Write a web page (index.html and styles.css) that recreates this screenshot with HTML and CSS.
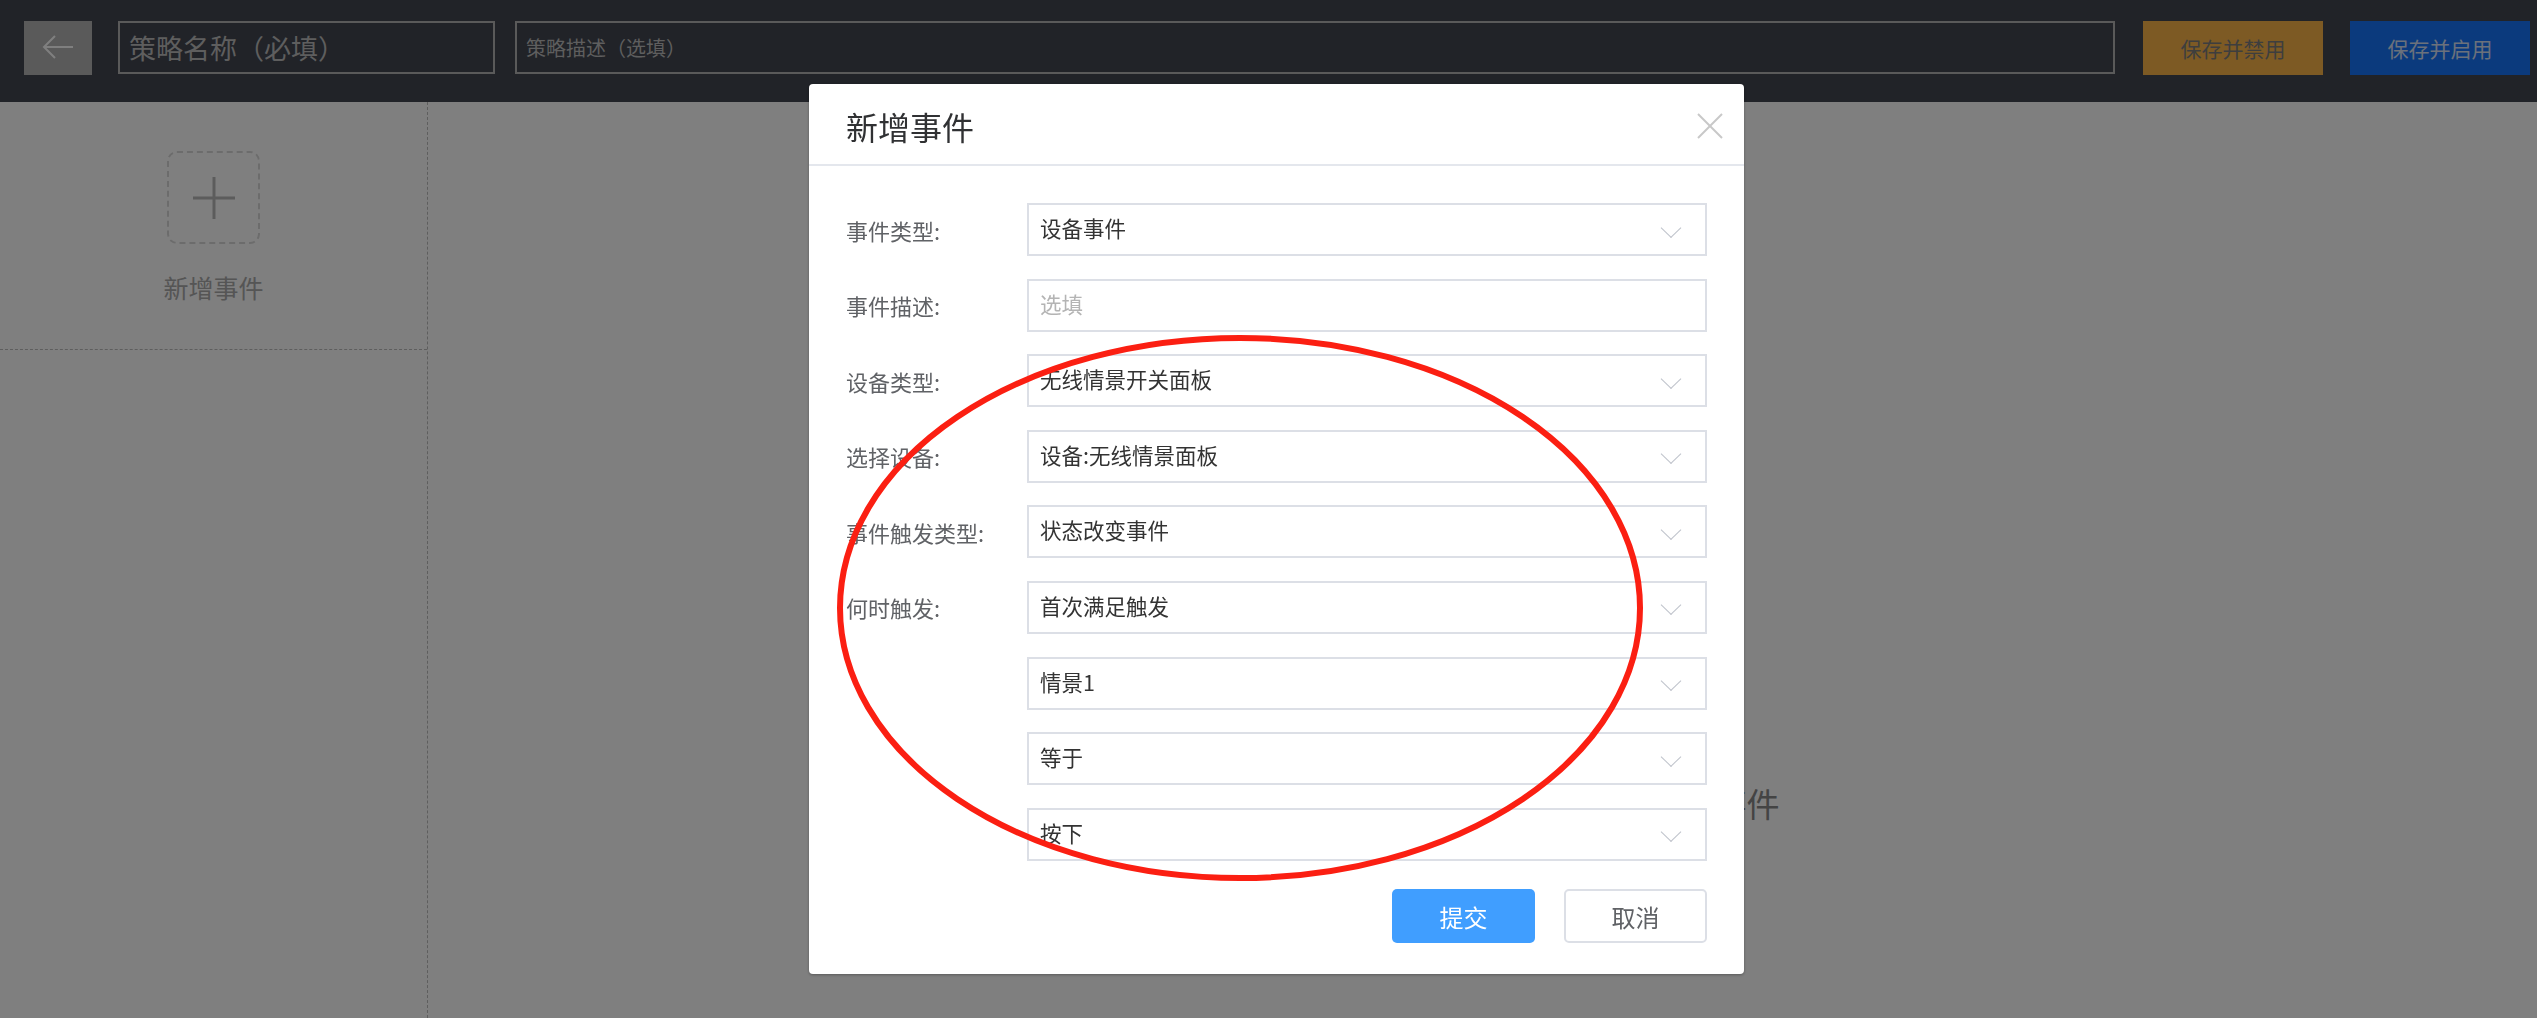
FILE: index.html
```html
<!DOCTYPE html>
<html lang="zh-CN">
<head>
  <meta charset="UTF-8">
  <meta name="viewport" content="width=device-width, initial-scale=1.0">
  <title>策略编辑</title>
  <link rel="stylesheet" href="styles.css">
</head>

<body>
  <div id="page">
    <header class="topbar">
      <button class="backBtn">
        <svg width="34" height="28" viewBox="0 0 34 28">
          <polyline points="14,3 3,14 14,25" fill="none" stroke="#fff" stroke-width="2"/>
          <line x1="3" y1="14" x2="32" y2="14" stroke="#fff" stroke-width="2"/>
        </svg>
      </button>
      <input class="nameInput" type="text" placeholder="策略名称（必填）">
      <input class="descInput" type="text" placeholder="策略描述（选填）">
      <button class="saveBtn disable">保存并禁用</button>
      <button class="saveBtn enable">保存并启用</button>
    </header>

    <main class="workspace">
      <aside class="eventList">
        <div class="addEvent">
          <div class="addBox">
            <svg width="42" height="42" viewBox="0 0 42 42">
              <line x1="0" y1="21" x2="42" y2="21" stroke="#b8b8b8" stroke-width="3"/>
              <line x1="21" y1="0" x2="21" y2="42" stroke="#b8b8b8" stroke-width="3"/>
            </svg>
          </div>
          <span class="addLabel">新增事件</span>
        </div>
      </aside>
      <section class="canvas">
        <div class="emptyState">
          <svg width="136" height="86" viewBox="0 0 136 86">
            <rect x="2" y="20" width="132" height="64" rx="8" fill="none" stroke="#ddd" stroke-width="3"/>
          </svg>
          <p class="emptyText">当前暂无事件，请点击左侧按钮新增事件</p>
        </div>
      </section>
    </main>
  </div>

  <div class="mask"></div>

  <div class="dialog">
    <div class="dialogHeader">
      <h2>新增事件</h2>
      <svg class="closeIcon" width="26" height="26" viewBox="0 0 26 26">
        <line x1="1" y1="1" x2="25" y2="25" stroke="#c8c8c8" stroke-width="2"/>
        <line x1="25" y1="1" x2="1" y2="25" stroke="#c8c8c8" stroke-width="2"/>
      </svg>
    </div>
    <div class="dialogBody">
      <form class="eventForm">
        <label>事件类型:</label>
        <div class="select"><span>设备事件</span><i class="arrow"></i></div>

        <label>事件描述:</label>
        <input class="textField" type="text" placeholder="选填">

        <label>设备类型:</label>
        <div class="select"><span>无线情景开关面板</span><i class="arrow"></i></div>

        <label>选择设备:</label>
        <div class="select"><span>设备:无线情景面板</span><i class="arrow"></i></div>

        <label>事件触发类型:</label>
        <div class="select"><span>状态改变事件</span><i class="arrow"></i></div>

        <label>何时触发:</label>
        <div class="select"><span>首次满足触发</span><i class="arrow"></i></div>

        <label></label>
        <div class="select"><span>情景1</span><i class="arrow"></i></div>

        <label></label>
        <div class="select"><span>等于</span><i class="arrow"></i></div>

        <label></label>
        <div class="select"><span>按下</span><i class="arrow"></i></div>
      </form>
      <div class="dialogFooter">
        <button class="primaryBtn">提交</button>
        <button class="plainBtn">取消</button>
      </div>
    </div>
  </div>

  <svg class="annotation" width="2537" height="1018" viewBox="0 0 2537 1018">
    <ellipse cx="1240" cy="608" rx="400" ry="270" fill="none" stroke="#fb1f12" stroke-width="6"/>
  </svg>
</body>
</html>
```

FILE: styles.css
```css
* {
  box-sizing: border-box;
}

body {
  margin: 0;
  width: 2537px;
  height: 1018px;
  overflow: hidden;
  background-color: #fff;
  font-family: "Noto Sans CJK SC", "Noto Sans", sans-serif;
}

#page {
  display: flex;
  flex-direction: column;
  height: 100%;
}

.topbar {
  display: flex;
  align-items: flex-start;
  height: 102px;
  padding: 21px 7px 0 24px;
  background-color: #424650;
}

.backBtn {
  display: flex;
  align-items: center;
  justify-content: center;
  width: 68px;
  height: 54px;
  padding: 0 0 2px 0;
  border: none;
  background-color: #b4b4b4;
}

.nameInput,
.descInput {
  height: 53px;
  border: 2px solid #b4b4b4;
  background-color: transparent;
  padding: 0 9px;
  font-family: inherit;
  outline: none;
}

.nameInput {
  width: 377px;
  margin-left: 26px;
  font-size: 27px;
}

.descInput {
  flex: 1;
  margin-left: 20px;
  font-size: 20px;
}

.nameInput::placeholder,
.descInput::placeholder {
  color: #bcbcbc;
}

.saveBtn {
  width: 180px;
  height: 54px;
  border: none;
  font-family: inherit;
  font-size: 21px;
}

.saveBtn.disable {
  margin-left: 28px;
  background-color: #fab449;
  color: #7c7c7c;
}

.saveBtn.enable {
  margin-left: 27px;
  background-color: #1674fb;
  color: #d6e2f6;
}

.workspace {
  display: flex;
  flex: 1;
}

.eventList {
  width: 428px;
  border-right: 1px dashed #bcbcbc;
}

.addEvent {
  display: flex;
  flex-direction: column;
  align-items: center;
  height: 248px;
  padding-top: 49px;
  border-bottom: 1px dashed #bcbcbc;
}

.addBox {
  display: flex;
  align-items: center;
  justify-content: center;
  width: 93px;
  height: 93px;
  border: 2px dashed #d8d8d8;
  border-radius: 10px;
}

.addLabel {
  margin-top: 24px;
  font-size: 25px;
  line-height: 38px;
  color: #aaa;
}

.canvas {
  flex: 1;
}

.emptyState {
  display: flex;
  flex-direction: column;
  align-items: center;
  padding-top: 555px;
}

.emptyText {
  margin: 40px 0 0;
  font-size: 33px;
  line-height: 40px;
  color: #888;
}

.mask {
  position: fixed;
  inset: 0;
  background-color: rgba(0, 0, 0, 0.5);
}

.dialog {
  position: fixed;
  left: 809px;
  top: 84px;
  width: 935px;
  background-color: #fff;
  border-radius: 4px;
  box-shadow: 0 1px 3px rgba(0, 0, 0, 0.3);
}

.dialogHeader {
  display: flex;
  align-items: center;
  justify-content: space-between;
  height: 82px;
  padding: 4px 21px 0 37px;
  border-bottom: 2px solid #e4e7ed;
}

.dialogHeader h2 {
  margin: 0;
  font-size: 32px;
  font-weight: normal;
  color: #303133;
}

.dialogBody {
  padding: 37px 37px 31px 37px;
}

.eventForm {
  display: grid;
  grid-template-columns: 181px 1fr;
  row-gap: 22.6px;
}

.eventForm label {
  display: flex;
  align-items: center;
  font-size: 22px;
  color: #606266;
}

.select,
.textField {
  display: flex;
  align-items: center;
  justify-content: space-between;
  height: 53px;
  padding: 0 24px 4px 11px;
  border: 2px solid #dcdfe6;
  font-family: inherit;
  font-size: 21.5px;
  color: #333;
}

.textField {
  outline: none;
}

.textField::placeholder {
  color: #b4b4b4;
}

.arrow {
  width: 14px;
  height: 14px;
  margin-right: 3px;
  border-right: 1.5px solid #c0c4cc;
  border-bottom: 1.5px solid #c0c4cc;
  transform: scaleX(1.05) rotate(45deg);
}

.dialogFooter {
  display: flex;
  justify-content: flex-end;
  gap: 29px;
  margin-top: 28.4px;
}

.primaryBtn,
.plainBtn {
  width: 143px;
  height: 54px;
  border-radius: 5px;
  font-family: inherit;
  font-size: 24px;
}

.primaryBtn {
  border: none;
  background-color: #409eff;
  color: #fff;
}

.plainBtn {
  border: 2px solid #dcdfe6;
  background-color: #fff;
  color: #606266;
}

.annotation {
  position: fixed;
  left: 0;
  top: 0;
  pointer-events: none;
}
```
